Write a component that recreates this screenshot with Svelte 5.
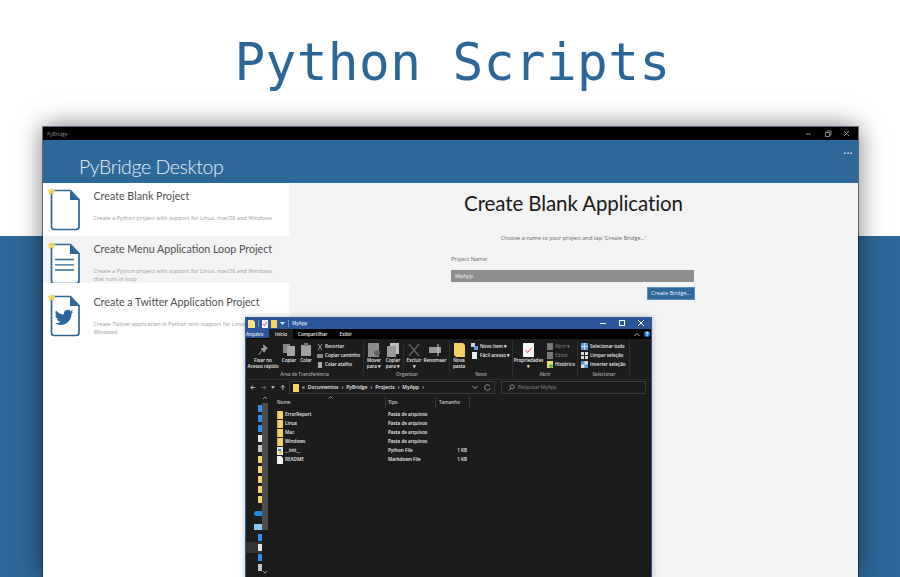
<script>
  const rows = [
    { title: "Create Blank Project", desc: "Create a Python project with support for Linux, macOS and Windows", icon: "blank" },
    { title: "Create Menu Application Loop Project", desc: "Create a Python project with support for Linux, macOS and Windows that runs in loop", icon: "menu" },
    { title: "Create a Twitter Application Project", desc: "Create Twitter application in Python with support for Linux, macOS and Windows", icon: "twitter" }
  ];
  const files = [
    { name: "ErrorReport", type: "Pasta de arquivos", size: "", icon: "folder" },
    { name: "Linux", type: "Pasta de arquivos", size: "", icon: "folder" },
    { name: "Mac", type: "Pasta de arquivos", size: "", icon: "folder" },
    { name: "Windows", type: "Pasta de arquivos", size: "", icon: "folder" },
    { name: "__init__", type: "Python File", size: "1 KB", icon: "py" },
    { name: "README", type: "Markdown File", size: "1 KB", icon: "md" }
  ];
  const tree = [
    { color: "#2f8ff0" }, { color: "#2f8ff0" }, { color: "#2f8ff0" }, { color: "#dfe6ee" }, { color: "#b9c6d2" },
    { color: "#f5d36a" }, { color: "#f5d36a" }, { color: "#f5d36a" }, { color: "#f5d36a" }, { color: "#f5d36a" },
    { color: "#1e88e5", kind: "cloud" }, { color: "#8fc8ee", kind: "monitor" },
    { color: "#2f8ff0" }, { color: "#dfe6ee", on: true }, { color: "#2f8ff0" }, { color: "#b9c6d2" }
  ];
  const crumbs = ["Documentos", "PyBridge", "Projects", "MyApp"];
  const twitter = "M23.953 4.57a10 10 0 01-2.825.775 4.958 4.958 0 002.163-2.723c-.951.555-2.005.959-3.127 1.184a4.92 4.92 0 00-8.384 4.482C7.69 8.095 4.067 6.13 1.64 3.162a4.822 4.822 0 00-.666 2.475c0 1.71.87 3.213 2.188 4.096a4.904 4.904 0 01-2.228-.616v.06a4.923 4.923 0 003.946 4.827 4.996 4.996 0 01-2.212.085 4.936 4.936 0 004.604 3.417 9.867 9.867 0 01-6.102 2.105c-.39 0-.779-.023-1.17-.067a13.995 13.995 0 007.557 2.209c9.053 0 13.998-7.496 13.998-13.985 0-.21 0-.42-.015-.63A9.935 9.935 0 0024 4.59z";
</script>

<div class="page">
  <h1>Python Scripts</h1>

  <div class="window">
    <div class="titlebar">
      <span>PyBridge</span>
      <div class="controls">
        <svg width="8" height="8" viewBox="0 0 8 8"><path d="M1 4h5" stroke="#888" /></svg>
        <svg width="8" height="8" viewBox="0 0 8 8" fill="none"><path d="M1.500 2.500h4v4h-4zM3 2.500V1h4v4H5.500" stroke="#888" /></svg>
        <svg width="8" height="8" viewBox="0 0 8 8"><path d="M1 1l5 5M6 1L1 6" stroke="#888" /></svg>
      </div>
    </div>
    <div class="header">
      <div class="brand">PyBridge Desktop</div>
      <div class="dots">•••</div>
    </div>
    <div class="body">
      <div class="side">
        {#each rows as row, i}
          <div class="row r{i}">
            <div class="doc">
              <svg width="32" height="42" viewBox="0 0 32 42">
                <path d="M2.500 1.500h19l8.500 9v27q0 3-3 3H5q-2.500 0-2.500-3z" fill="#fff" stroke="#2d6898" stroke-width="1.700" />
                <path d="M21 1.500l9 9.500h-9z" fill="#2d6898" />
                {#if row.icon === "menu"}
                  <path d="M6 16.500h19M6 21.800h19M6 27h19" stroke="#2d6898" stroke-width="1.300" />
                {:else if row.icon === "twitter"}
                  <path d={twitter} fill="#2d6898" transform="translate(5.700 13) scale(.78)" />
                {/if}
              </svg>
              <svg class="star" width="9" height="9" viewBox="0 0 9 9">
                <path d="M4.500 0l1 3.200 3.300-.6-2.200 2.300 1.500 3.100-3.600-1.500-3 1.800.7-3.400L0 2.600l3.500.3z" fill="#f2d65a" />
              </svg>
            </div>
            <div class="text">
              <div class="rtitle">{row.title}</div>
              <div class="rdesc">{row.desc}</div>
            </div>
          </div>
        {/each}
      </div>

      <div class="main">
        <h2>Create Blank Application</h2>
        <p class="hint">Choose a name to your project and tap 'Create Bridge...'</p>
        <div class="form">
          <label for="pname">Project Name:</label>
          <div id="pname" class="input">MyApp</div>
          <button>Create Bridge...</button>
        </div>
      </div>
    </div>

    <div class="explorer">
      <div class="xtitle">
        <svg width="7" height="8" viewBox="0 0 7 8"><path d="M0 0h5l2 2v6H0z" fill="#f6e08a" /></svg>
        <i class="sep"></i>
        <svg width="6" height="8" viewBox="0 0 6 8"><rect width="6" height="8" fill="#f4f4f4" /><path d="M1 4l1.500 1.500L5 2" stroke="#d8483c" fill="none" /></svg>
        <svg width="6" height="8" viewBox="0 0 6 8"><rect width="6" height="8" fill="#f6d365" /></svg>
        <svg width="5" height="5" viewBox="0 0 5 5"><path d="M0 1h5L2.500 4z" fill="#dde7f5" /></svg>
        <i class="sep"></i>
        <span>MyApp</span>
        <div class="xctl">
          <svg width="9" height="9" viewBox="0 0 9 9"><path d="M1 4.500h6" stroke="#fff" /></svg>
          <svg width="9" height="9" viewBox="0 0 9 9"><rect x="1.500" y="1.500" width="5" height="5" fill="none" stroke="#fff" /></svg>
          <svg width="9" height="9" viewBox="0 0 9 9"><path d="M1 1l6 6M7 1L1 7" stroke="#fff" /></svg>
        </div>
      </div>

      <div class="tabs">
        <span class="tab file">Arquivo</span>
        <span class="tab on">Início</span>
        <span class="tab">Compartilhar</span>
        <span class="tab">Exibir</span>
        <div class="tabr">
          <svg width="6" height="5" viewBox="0 0 6 5"><path d="M.5 4L3 1.500 5.500 4" fill="none" stroke="#bbb" /></svg>
          <b>?</b>
        </div>
      </div>

      <div class="ribbon">
        <div class="group g1">
          <div class="tools">
            <div class="big w34">
              <svg width="10" height="14" viewBox="0 0 10 14"><path d="M5.500 2l4 3.500-2 .5-1 3-3.500-3 3-1zM3.500 8L.5 12" fill="#9a9a9a" stroke="#9a9a9a" /></svg>
              <span>Fixar no<br />Acesso rápido</span>
            </div>
            <div class="big w16">
              <svg width="12" height="14" viewBox="0 0 12 14"><path d="M0 1h7v9H0z" fill="#888" /><path d="M4 3h8v10H4z" fill="#a5a5a5" /></svg>
              <span>Copiar</span>
            </div>
            <div class="big w16">
              <svg width="10" height="14" viewBox="0 0 10 14"><path d="M0 2h10v11H0z" fill="#a0a0a0" /><path d="M3 0h4v3H3z" fill="#777" /></svg>
              <span>Colar</span>
            </div>
            <div class="small">
              <div><svg width="6" height="6" viewBox="0 0 6 6"><path d="M1 0l4 6M5 0L1 6" stroke="#999" /></svg>Recortar</div>
              <div><svg width="6" height="6" viewBox="0 0 6 6"><path d="M0 1h6v4H0z" fill="#888" /></svg>Copiar caminho</div>
              <div><svg width="6" height="6" viewBox="0 0 6 6"><path d="M1 0h4v6H1z" fill="#aaa" /></svg>Colar atalho</div>
            </div>
          </div>
          <div class="glabel">Área de Transferência</div>
        </div>

        <div class="group g2">
          <div class="tools">
            <div class="big w18">
              <svg width="12" height="14" viewBox="0 0 12 14"><path d="M0 0h11v14H0z" fill="#8c8c8c" /><circle cx="9" cy="10" r="3" fill="#666" /></svg>
              <span>Mover<br />para ▾</span>
            </div>
            <div class="big w18">
              <svg width="12" height="14" viewBox="0 0 12 14"><path d="M3 0h9v11H3z" fill="#bbb" /><path d="M0 3h9v11H0z" fill="#999" /></svg>
              <span>Copiar<br />para ▾</span>
            </div>
            <i class="vline"></i>
            <div class="big w18">
              <svg width="12" height="14" viewBox="0 0 12 14"><path d="M1 1l10 12M11 1L1 13" stroke="#666" stroke-width="1.200" /></svg>
              <span>Excluir<br />▾</span>
            </div>
            <div class="big w22">
              <svg width="14" height="14" viewBox="0 0 14 14"><path d="M1 4h12v6H1z" fill="#999" /><path d="M10 1v12" stroke="#ccc" /></svg>
              <span>Renomear</span>
            </div>
          </div>
          <div class="glabel">Organizar</div>
        </div>

        <div class="group g3">
          <div class="tools">
            <div class="big w18">
              <svg width="11" height="14" viewBox="0 0 11 14"><path d="M0 0h9l2 2v12H2l-2-2z" fill="#f5cf62" /></svg>
              <span>Nova<br />pasta</span>
            </div>
            <div class="small">
              <div><svg width="7" height="7" viewBox="0 0 7 7"><path d="M0 0h4v4H0z" fill="#c8d6e8" /><path d="M3 3h4v4H3z" fill="#5b9bd5" /></svg>Novo item ▾</div>
              <div><svg width="7" height="7" viewBox="0 0 7 7"><path d="M1 0h5v7H1z" fill="#eee" /></svg>Fácil acesso ▾</div>
            </div>
          </div>
          <div class="glabel">Novo</div>
        </div>

        <div class="group g4">
          <div class="tools">
            <div class="big w31">
              <svg width="11" height="14" viewBox="0 0 11 14"><path d="M0 0h11v14H0z" fill="#f7f7f7" /><path d="M2.500 7l2 2.500L8.500 5" stroke="#e0533f" fill="none" /></svg>
              <span>Propriedades<br />▾</span>
            </div>
            <div class="small">
              <div><svg width="6" height="7" viewBox="0 0 6 7"><path d="M0 0h6v7H0z" fill="#777" /></svg><em>Abrir ▾</em></div>
              <div><svg width="6" height="7" viewBox="0 0 6 7"><path d="M0 0h6v7H0z" fill="#777" /></svg><em>Editar</em></div>
              <div><svg width="6" height="7" viewBox="0 0 6 7"><path d="M0 0h6v7H0z" fill="#f0d878" /><circle cx="4" cy="5" r="2" fill="#5cb85c" /></svg>Histórico</div>
            </div>
          </div>
          <div class="glabel">Abrir</div>
        </div>

        <div class="group g5">
          <div class="tools">
            <div class="small">
              <div><svg width="7" height="7" viewBox="0 0 7 7"><path d="M0 0h7v7H0z" fill="#5b9bd5" /><path d="M3.500 0v7M0 3.500h7" stroke="#cfe2f5" /></svg>Selecionar tudo</div>
              <div><svg width="7" height="7" viewBox="0 0 7 7"><path d="M0 0h7v7H0z" fill="#ddd" /><path d="M3.500 0v7M0 3.500h7" stroke="#222" /></svg>Limpar seleção</div>
              <div><svg width="7" height="7" viewBox="0 0 7 7"><path d="M0 0h7v7H0z" fill="#ddd" /><path d="M0 0h3.500v3.500H0zM3.500 3.500H7V7H3.500z" fill="#5b9bd5" /></svg>Inverter seleção</div>
            </div>
          </div>
          <div class="glabel">Selecionar</div>
        </div>
      </div>

      <div class="addr">
        <div class="nav">
          <svg width="7" height="7" viewBox="0 0 7 7"><path d="M6.500 3.500H1M3.500 1L1 3.500 3.500 6" fill="none" stroke="#ddd" /></svg>
          <svg width="7" height="7" viewBox="0 0 7 7"><path d="M.5 3.500H6M3.500 1L6 3.500 3.500 6" fill="none" stroke="#777" /></svg>
          <svg width="5" height="5" viewBox="0 0 5 5"><path d="M0 1h5L2.500 4z" fill="#ccc" /></svg>
          <svg width="7" height="7" viewBox="0 0 7 7"><path d="M3.500 6.500V1M1 3.500L3.500 1 6 3.500" fill="none" stroke="#ddd" /></svg>
        </div>
        <div class="path">
          <svg width="6" height="8" viewBox="0 0 6 8"><path d="M0 0h6v8H0z" fill="#f6d365" /></svg>
          <div class="crumbs">
            <span>«</span>
            {#each crumbs as crumb}
              <span>{crumb}</span>
              <span>›</span>
            {/each}
          </div>
          <svg class="pchev" width="6" height="5" viewBox="0 0 6 5"><path d="M.5 1L3 3.500 5.500 1" fill="none" stroke="#aaa" /></svg>
          <svg width="7" height="7" viewBox="0 0 7 7"><path d="M5.800 2A2.800 2.800 0 1 0 6.200 4" fill="none" stroke="#999" /></svg>
        </div>
        <div class="search">
          <svg width="7" height="7" viewBox="0 0 7 7"><circle cx="4.200" cy="2.800" r="2" fill="none" stroke="#888" /><path d="M2.800 4.200L.5 6.500" stroke="#888" /></svg>
          Pesquisar MyApp
        </div>
      </div>

      <div class="content">
        <div class="tree">
          <div class="treeicons">
            {#each tree as item}
              <div class="titem {item.kind ?? ''}" class:on={item.on}>
                <i style="background: {item.color}"></i>
              </div>
            {/each}
          </div>
          <div class="scroll">
            <svg width="6" height="4" viewBox="0 0 6 4"><path d="M1 3l2-2 2 2" fill="none" stroke="#999" /></svg>
            <i></i>
            <svg class="sdown" width="6" height="4" viewBox="0 0 6 4"><path d="M1 1l2 2 2-2" fill="none" stroke="#999" /></svg>
          </div>
        </div>
        <div class="list">
          <div class="cols">
            <span class="cname">Nome</span>
            <span class="ctype">Tipo</span>
            <span class="csize">Tamanho</span>
            <svg class="sort" width="5" height="3" viewBox="0 0 5 3"><path d="M.5 2.500L2.500 .5l2 2" fill="none" stroke="#999" /></svg>
          </div>
          {#each files as f}
            <div class="file">
              <span class="cname">
                {#if f.icon === "folder"}
                  <svg width="6" height="8" viewBox="0 0 6 8"><path d="M0 0h6v8H0z" fill="#f5d36a" /><path d="M0 0v8" stroke="#b88f2e" /></svg>
                {:else if f.icon === "py"}
                  <svg width="6" height="8" viewBox="0 0 6 8"><path d="M0 0h6v8H0z" fill="#eee" /><path d="M1 2h3v2H1z" fill="#3d7fc4" /><path d="M2 4h3v3H2z" fill="#f2c73c" /></svg>
                {:else}
                  <svg width="6" height="8" viewBox="0 0 6 8"><path d="M0 0h4l2 2v6H0z" fill="#f2f2f2" /></svg>
                {/if}
                {f.name}
              </span>
              <span class="ctype">{f.type}</span>
              <span class="csize">{f.size}</span>
            </div>
          {/each}
        </div>
      </div>
    </div>
  </div>
</div>

<style>
  :global(body) {
    margin: 0;
  }

  .page {
    height: 577px;
    overflow: hidden;
    background: linear-gradient(#fff 236px, #2d6898 236px);
    font-family: "Open Sans", "Noto Sans", sans-serif;
  }

  h1 {
    margin: 0;
    height: 127px;
    box-sizing: border-box;
    padding: 27.500px 0 0 5px;
    text-align: center;
    font: 400 51px/70px "DejaVu Sans Mono", monospace;
    letter-spacing: .45px;
    color: #2b6698;
  }

  .window {
    position: relative;
    width: 815px;
    height: 450px;
    margin-left: 43px;
    background: #f3f3f3;
    box-shadow: 0 0 0 1px rgba(10, 30, 60, .55), 0 0 24px rgba(0, 0, 0, .55);
  }

  .titlebar {
    display: flex;
    align-items: center;
    justify-content: space-between;
    height: 13px;
    padding: 0 5px 0 4px;
    background: #000;
    color: #8a8a8a;
    font-size: 5px;
  }

  .controls {
    display: flex;
    gap: 11px;
    padding-right: 2px;
  }

  .header {
    display: flex;
    justify-content: space-between;
    height: 43px;
    box-sizing: border-box;
    padding: 13px 5px 0 36px;
    background: #2d6898;
    color: #e8f0f6;
  }

  .brand {
    font-family: Lato, sans-serif;
    font-size: 19.500px;
    font-weight: 300;
    letter-spacing: -.4px;
    line-height: 28px;
  }

  .dots {
    margin-top: -4px;
    font-size: 7px;
    line-height: 10px;
    letter-spacing: .5px;
    color: #cfdfea;
  }

  .body {
    display: flex;
    height: 394px;
  }

  .side {
    width: 246px;
    flex: none;
    background: #fff;
  }

  .row {
    display: flex;
    height: 53px;
    box-sizing: border-box;
    padding-top: 6px;
    background: #fff;
  }

  .r1 {
    height: 47px;
    padding-top: 7px;
    background: #f3f3f3;
    overflow: hidden;
  }

  .r2 {
    height: 54px;
    padding-top: 12px;
  }

  .doc {
    position: relative;
    width: 50.500px;
    height: 42px;
    padding-left: 6px;
    box-sizing: border-box;
    flex: none;
  }

  .star {
    position: absolute;
    left: 4px;
    top: -2px;
  }

  .text {
    margin-top: -1px;
  }

  .r1 .text {
    margin-top: -2px;
  }

  .rtitle {
    font-family: Lato, sans-serif;
    font-size: 10.700px;
    line-height: 15px;
    color: #505050;
    white-space: nowrap;
  }

  .rdesc {
    margin-top: 11px;
    width: 190px;
    font-size: 5.600px;
    line-height: 8px;
    color: #999;
  }

  .main {
    flex: 1;
    padding-top: 7px;
    text-align: center;
  }

  h2 {
    margin: 0;
    font-family: Lato, sans-serif;
    font-size: 20.500px;
    font-weight: 400;
    letter-spacing: -.1px;
    line-height: 26px;
    color: #1a1a1a;
  }

  .hint {
    margin: 18px 0 0;
    font-size: 5.600px;
    line-height: 8px;
    color: #666;
  }

  .form {
    display: flex;
    flex-direction: column;
    align-items: flex-end;
    width: 243px;
    margin: 13px 0 0 162px;
    text-align: left;
  }

  label {
    align-self: flex-start;
    font-size: 5.600px;
    line-height: 8px;
    color: #666;
  }

  .input {
    width: 243px;
    height: 12px;
    margin-top: 7px;
    box-sizing: border-box;
    padding-left: 4px;
    background: #8e8e8e;
    color: #eee;
    font-size: 5.600px;
    line-height: 12px;
  }

  button {
    width: 48px;
    height: 12.500px;
    margin: 5px -1px 0 0;
    padding: 0;
    border: 1px solid #5a90b8;
    background: #2d6898;
    color: #eef;
    font: 5.600px "Open Sans", sans-serif;
  }

  .explorer {
    position: absolute;
    left: 202px;
    top: 190px;
    width: 407px;
    height: 262px;
    display: flex;
    flex-direction: column;
    background: #1c1c1c;
    border: 1px solid #2b579a;
    border-bottom: 0;
    box-sizing: border-box;
    box-shadow: 0 0 6px rgba(0, 0, 0, .25);
    color: #ececec;
    font-size: 4.600px;
    font-weight: 600;
    line-height: 7px;
    white-space: nowrap;
  }

  .xtitle {
    display: flex;
    align-items: center;
    gap: 3px;
    height: 11px;
    flex: none;
    padding-left: 2px;
    background: #2b579a;
    color: #dbe5f3;
  }

  .sep {
    width: 1px;
    height: 7px;
    background: #6c8fc2;
  }

  .xctl {
    display: flex;
    gap: 10px;
    margin-left: auto;
    padding-right: 5px;
  }

  .tabs {
    display: flex;
    height: 10px;
    flex: none;
    background: #000;
    line-height: 10px;
  }

  .tab {
    padding: 0 6px 0 5px;
    margin-right: 1px;
  }

  .tab.file {
    width: 23px;
    margin: 0;
    padding: 0;
    background: #2b579a;
    text-align: center;
  }

  .tab.on {
    width: 24px;
    margin: 0;
    padding: 0;
    background: #1c1c1c;
    text-align: center;
  }

  .tabr {
    display: flex;
    align-items: center;
    gap: 4px;
    margin-left: auto;
    padding-right: 1px;
  }

  .tabr b {
    width: 6px;
    height: 6px;
    border-radius: 50%;
    background: #1e7fd8;
    color: #fff;
    font-size: 5px;
    line-height: 6px;
    text-align: center;
  }

  .ribbon {
    display: flex;
    height: 41px;
    flex: none;
    box-sizing: border-box;
    background: #1c1c1c;
    border-bottom: 1px solid #2a2a2a;
  }

  .group {
    display: flex;
    flex-direction: column;
    border-right: 1px solid #2e2e2e;
    box-sizing: border-box;
    margin: 1px 0;
  }

  .g1 { width: 118px; }
  .g2 { width: 86px; padding-left: 1px; }
  .g3 { width: 63px; }
  .g4 { width: 65px; }
  .g5 { width: 52px; padding-left: 1px; }

  .tools {
    display: flex;
    flex: 1;
    gap: 1px;
    min-height: 0;
  }

  .big {
    display: flex;
    flex-direction: column;
    align-items: center;
    padding-top: 3px;
    text-align: center;
    line-height: 6px;
  }

  .big svg {
    flex: none;
  }

  .w16 { width: 16px; }
  .w18 { width: 18px; }
  .w22 { width: 22px; }
  .w31 { width: 31px; }
  .w34 { width: 34px; }

  .vline {
    width: 1px;
    height: 30px;
    margin: 2px 0;
    background: #2e2e2e;
  }

  .small {
    display: flex;
    flex-direction: column;
    gap: 2px;
    padding: 3px 0 0 2px;
  }

  .small div {
    display: flex;
    align-items: center;
    gap: 2px;
    height: 7px;
  }

  .small em {
    font-style: normal;
    color: #777;
  }

  .glabel {
    height: 7px;
    text-align: center;
    color: #aaa;
  }

  .addr {
    display: flex;
    align-items: center;
    gap: 3px;
    height: 15px;
    flex: none;
    padding: 0 5px 0 4px;
  }

  .nav {
    display: flex;
    align-items: center;
    gap: 5px;
    width: 36px;
  }

  .path,
  .search {
    display: flex;
    align-items: center;
    gap: 3px;
    height: 13px;
    box-sizing: border-box;
    padding: 0 3px;
    border: 1px solid #3a3a3a;
  }

  .path {
    width: 206px;
    margin-right: 3px;
  }

  .crumbs {
    display: flex;
    flex: 1;
    gap: 3px;
    font-size: 5px;
  }

  .pchev {
    margin-right: 3px;
  }

  .search {
    flex: 1;
    padding-left: 6px;
    color: #777;
  }

  .content {
    display: flex;
    flex: 1;
    min-height: 0;
  }

  .tree {
    display: flex;
    width: 23px;
    flex: none;
  }

  .treeicons {
    width: 16px;
    padding-top: 8px;
  }

  .titem {
    display: flex;
    align-items: center;
    justify-content: flex-end;
    height: 10.200px;
  }

  .titem.on {
    background: #333;
  }

  .titem i {
    width: 4px;
    height: 7px;
  }

  .titem.cloud {
    margin-top: 4px;
  }

  .titem.cloud i {
    width: 8px;
    height: 5px;
    border-radius: 3px 0 0 3px;
  }

  .titem.monitor {
    margin-top: 3px;
  }

  .titem.monitor i {
    width: 8px;
    height: 6px;
  }

  .scroll {
    position: relative;
    width: 6px;
    padding-top: 1px;
  }

  .scroll svg {
    display: block;
  }

  .scroll i {
    display: block;
    height: 127px;
    margin-top: 3px;
    background: #4e4e4e;
  }

  .sdown {
    position: absolute;
    bottom: 5px;
    left: 0;
  }

  .list {
    flex: 1;
    padding-left: 8px;
  }

  .cols,
  .file {
    display: flex;
    align-items: center;
  }

  .cols {
    position: relative;
    height: 14px;
    margin-bottom: 1px;
    color: #ccc;
  }

  .sort {
    position: absolute;
    left: 51px;
    top: 1px;
  }

  .file {
    height: 9px;
  }

  .cname {
    display: flex;
    align-items: center;
    gap: 2px;
    width: 111px;
    flex: none;
  }

  .ctype {
    width: 50px;
    flex: none;
  }

  .csize {
    width: 29px;
    flex: none;
    text-align: right;
  }

  .cols .cname,
  .cols .ctype,
  .cols .csize {
    height: 11px;
    box-sizing: border-box;
    line-height: 11px;
    border-right: 1px solid #3a3a3a;
    text-align: left;
  }

  .cols .cname { width: 109px; margin-right: 2px; }
  .cols .ctype { width: 48px; margin-right: 3px; }
  .cols .csize { width: 31px; }
</style>
